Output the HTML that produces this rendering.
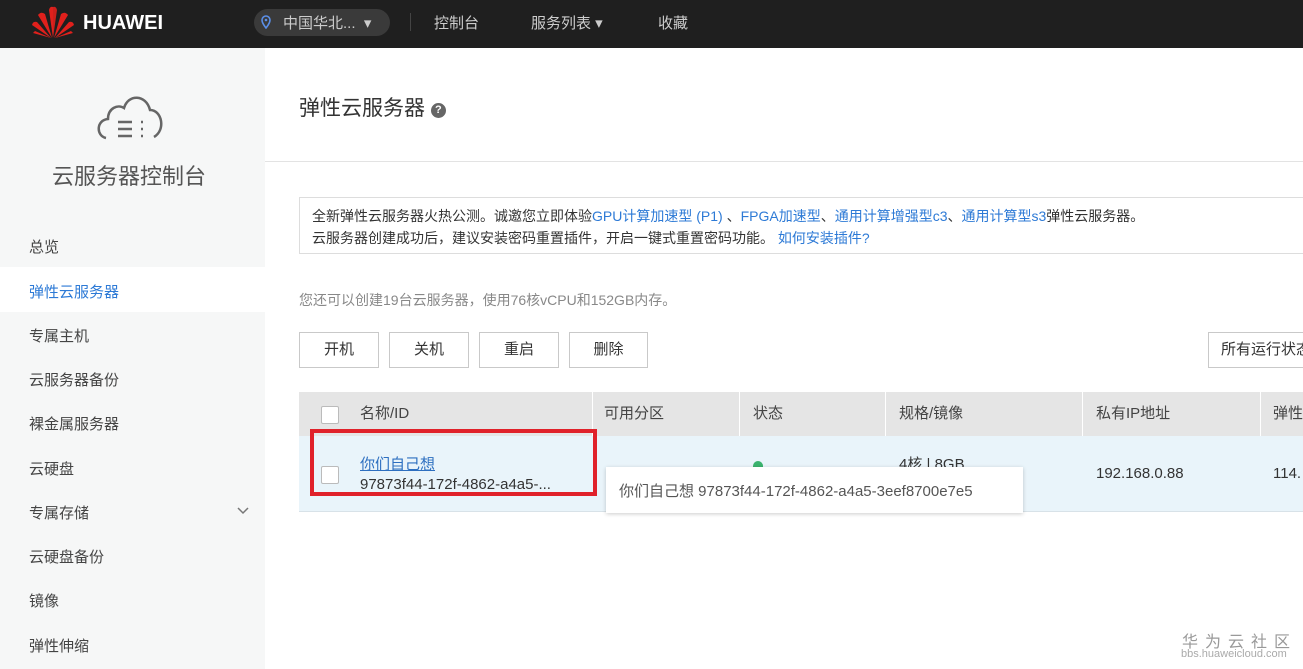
<!DOCTYPE html>
<html><head><meta charset="utf-8"><style>
*{margin:0;padding:0;box-sizing:border-box}
body{width:1303px;height:669px;overflow:hidden;background:#fff;font-family:"Liberation Sans","Noto Sans CJK SC",sans-serif;color:#333;font-size:14px;position:relative}
.top{position:absolute;left:0;top:0;width:1303px;height:48px;background:#1f1f1f;color:#ccc}
.abs{position:absolute;white-space:nowrap}
.side{position:absolute;left:0;top:48px;width:265px;height:621px;background:#f6f7f7}
.nav{position:absolute;left:29px;font-size:15px;color:#444}
.btn{position:absolute;top:332px;height:36px;border:1px solid #c9c9c9;background:#fff;font-size:15px;text-align:center;line-height:34px;color:#333;white-space:nowrap;overflow:hidden}
.th{position:absolute;top:392px;height:44px;line-height:44px;font-size:15px;color:#444}
.cb{position:absolute;width:18px;height:18px;border:1px solid #bbb;background:#fff;border-radius:2px}
</style></head><body>
<div class="top">
<svg class="abs" style="left:30px;top:5px" width="46" height="34" viewBox="0 0 46 34"><g fill="#e0201c"><path d="M23 33 L19 5 Q20 1 23 2 Z"/><path d="M23 33 L27 5 Q26 1 23 2 Z" opacity=".9"/><path d="M22 33 L8 10 Q11 6 15 9Z"/><path d="M24 33 L38 10 Q35 6 31 9Z"/><path d="M21 33 L2 20 Q3 16 7 17Z"/><path d="M25 33 L44 20 Q43 16 39 17Z"/><path d="M21 33 L3 28 L5 26Z"/><path d="M25 33 L43 28 L41 26Z"/></g></svg>
<div class="abs" style="left:83px;top:12px;font-size:20px;font-weight:bold;color:#fff">HUAWEI</div>
<div class="abs" style="left:254px;top:9px;width:136px;height:27px;background:#3a3a3a;border-radius:14px"></div>
<svg class="abs" style="left:261px;top:15px" width="10" height="14" viewBox="0 0 10 14"><path d="M5 13 C1 8 1 6 1 5 A4 4 0 0 1 9 5 C9 6 9 8 5 13Z" fill="none" stroke="#5b8fe8" stroke-width="1.6"/><circle cx="5" cy="5" r="1.3" fill="#5b8fe8"/></svg>
<div class="abs" style="left:283px;top:12px;font-size:15px;color:#ccc">中国华北... &nbsp;▾</div>
<div class="abs" style="left:410px;top:13px;width:1px;height:18px;background:#444"></div>
<div class="abs" style="left:434px;top:12px;font-size:15px">控制台</div>
<div class="abs" style="left:531px;top:12px;font-size:15px">服务列表 ▾</div>
<div class="abs" style="left:658px;top:12px;font-size:15px">收藏</div>
</div>
<div class="side">
<svg class="abs" style="left:94px;top:42px" width="72" height="52" viewBox="0 0 72 52"><path d="M12 48 C2 46 2 30 14 29 C14 18 24 14 30 18 C34 4 52 4 56 20 C68 20 72 40 60 47" fill="none" stroke="#666" stroke-width="2.5"/><g stroke="#666" stroke-width="2.5"><path d="M24 32h14M24 39h14M24 46h14"/><path d="M47 32h2M47 39h2M47 46h2"/></g></svg>
<div class="abs" style="left:52px;top:111px;font-size:22px;color:#555">云服务器控制台</div>
<div class="abs" style="left:0;top:219px;width:265px;height:45px;background:#fff"></div>
<div class="nav" style="top:188px">总览</div>
<div class="nav" style="top:233px;color:#2d7ad6">弹性云服务器</div>
<div class="nav" style="top:277px">专属主机</div>
<div class="nav" style="top:321px">云服务器备份</div>
<div class="nav" style="top:365px">裸金属服务器</div>
<div class="nav" style="top:410px">云硬盘</div>
<div class="nav" style="top:454px">专属存储</div>
<svg class="abs" style="left:237px;top:459px" width="12" height="8" viewBox="0 0 12 8"><path d="M1 1l5 5 5-5" fill="none" stroke="#777" stroke-width="1.5"/></svg>
<div class="nav" style="top:498px">云硬盘备份</div>
<div class="nav" style="top:542px">镜像</div>
<div class="nav" style="top:587px">弹性伸缩</div>
</div>
<div class="abs" style="left:299px;top:92px;font-size:21px;color:#333">弹性云服务器 <span style="display:inline-block;width:15px;height:15px;border-radius:8px;background:#666;color:#fff;font-size:11px;line-height:15px;text-align:center;vertical-align:2px;font-weight:bold">?</span></div>
<div class="abs" style="left:265px;top:161px;width:1038px;height:1px;background:#e3e3e3"></div>
<div class="abs" style="left:299px;top:197px;width:1010px;height:57px;border:1px solid #ddd;background:#fff"></div>
<div class="abs" style="left:312px;top:205px;font-size:14px;color:#333;line-height:22px">全新弹性云服务器火热公测。诚邀您立即体验<span style="color:#2d7ad6">GPU计算加速型 (P1)</span> 、<span style="color:#2d7ad6">FPGA加速型</span>、<span style="color:#2d7ad6">通用计算增强型c3</span>、<span style="color:#2d7ad6">通用计算型s3</span>弹性云服务器。<br>云服务器创建成功后，建议安装密码重置插件，开启一键式重置密码功能。 <span style="color:#2d7ad6">如何安装插件?</span></div>
<div class="abs" style="left:299px;top:290px;font-size:14px;color:#888">您还可以创建19台云服务器，使用76核vCPU和152GB内存。</div>
<div class="btn" style="left:299px;width:80px">开机</div>
<div class="btn" style="left:389px;width:80px">关机</div>
<div class="btn" style="left:479px;width:80px">重启</div>
<div class="btn" style="left:569px;width:79px">删除</div>
<div class="btn" style="left:1208px;width:100px;text-align:left;padding-left:12px">所有运行状态</div>
<div class="abs" style="left:299px;top:392px;width:1004px;height:44px;background:#e5e5e5"></div>
<div class="abs" style="left:299px;top:436px;width:1004px;height:76px;background:#e9f4fa;border-bottom:1px solid #d8e2e8"></div>
<div class="abs" style="left:592px;top:392px;width:1px;height:44px;background:#fff"></div>
<div class="abs" style="left:739px;top:392px;width:1px;height:44px;background:#fff"></div>
<div class="abs" style="left:885px;top:392px;width:1px;height:44px;background:#fff"></div>
<div class="abs" style="left:1082px;top:392px;width:1px;height:44px;background:#fff"></div>
<div class="abs" style="left:1260px;top:392px;width:1px;height:44px;background:#fff"></div>
<div class="cb" style="left:321px;top:406px"></div>
<div class="th" style="left:360px">名称/ID</div>
<div class="th" style="left:604px">可用分区</div>
<div class="th" style="left:753px">状态</div>
<div class="th" style="left:899px">规格/镜像</div>
<div class="th" style="left:1096px">私有IP地址</div>
<div class="th" style="left:1273px">弹性</div>
<div class="cb" style="left:321px;top:466px"></div>
<div class="abs" style="left:360px;top:453px;font-size:15px;color:#2d6fc0;text-decoration:underline">你们自己想</div>
<div class="abs" style="left:360px;top:476px;font-size:15px;color:#333">97873f44-172f-4862-a4a5-...</div>
<div class="abs" style="left:310px;top:429px;width:287px;height:67px;border:4px solid #e0212a"></div>
<div class="abs" style="left:753px;top:461px;width:10px;height:6px;border-radius:5px 5px 0 0;background:#3bb36e"></div>
<div class="abs" style="left:899px;top:453px;font-size:15px;color:#333">4核 | 8GB</div>
<div class="abs" style="left:1096px;top:465px;font-size:15px;color:#333">192.168.0.88</div>
<div class="abs" style="left:1273px;top:465px;font-size:15px;color:#333">114.</div>
<div class="abs" style="left:606px;top:467px;width:417px;height:46px;background:#fff;box-shadow:0 1px 4px rgba(0,0,0,.2)"></div>
<div class="abs" style="left:619px;top:480px;font-size:15px;color:#555">你们自己想 97873f44-172f-4862-a4a5-3eef8700e7e5</div>
<div class="abs" style="left:1182px;top:628px;font-size:16px;color:#999;letter-spacing:7px">华为云社区</div>
<div class="abs" style="left:1181px;top:648px;font-size:11px;color:#aaa">bbs.huaweicloud.com</div>
</body></html>
